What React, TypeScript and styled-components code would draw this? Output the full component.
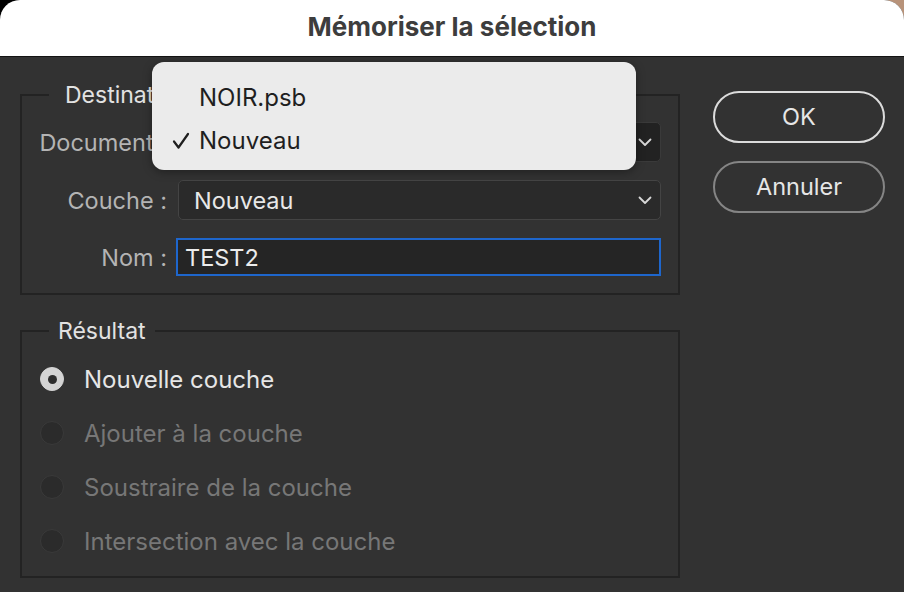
import React from "react";
import styled, { createGlobalStyle } from "styled-components";

const GlobalStyle = createGlobalStyle`
  html, body {
    margin: 0;
    width: 904px;
    height: 592px;
    overflow: hidden;
    background: linear-gradient(90deg, #000 50%, #b8937a 50%);
    font-family: Inter, "Noto Sans", "Liberation Sans", sans-serif;
  }
  * { box-sizing: border-box; }
`;

const Window = styled.div`
  position: relative;
  width: 904px;
  height: 592px;
  border-radius: 20px 20px 0 0;
  overflow: hidden;
  background: #323232;
  display: flex;
  flex-direction: column;
`;

const TitleBar = styled.div`
  height: 57px;
  flex: none;
  background: #fff;
  border-bottom: 1px solid #141414;
  display: flex;
  align-items: center;
  justify-content: center;
`;

const Title = styled.h1`
  margin: 0 0 4px 0;
  font-size: 26px;
  font-weight: 700;
  color: #3d3d3d;
`;

const Body = styled.div`
  flex: 1;
  display: flex;
  gap: 33px;
  padding: 24px 0 0 20px;
`;

const Main = styled.div`
  width: 660px;
  display: flex;
  flex-direction: column;
  gap: 22px;
`;

const Group = styled.fieldset`
  margin: 0;
  padding: 0;
  border: 2px solid #232323;
  min-width: 0;
`;

const Legend = styled.legend<{ $pad: number }>`
  margin-left: 27px;
  padding: 0 ${(p) => p.$pad}px;
  font-size: 23px;
  line-height: 28px;
  color: #e2e2e2;
`;

const FormGrid = styled.div`
  display: grid;
  grid-template-columns: 145px 483px;
  column-gap: 11px;
  row-gap: 18px;
  align-items: center;
  padding: 13px 0 17px 0;
`;

const Label = styled.label`
  text-align: right;
  font-size: 23.5px;
  color: #b4b4b4;
  white-space: nowrap;
`;

const Select = styled.div<{ $tone: "dark" | "mid" }>`
  height: 40px;
  display: flex;
  align-items: center;
  justify-content: space-between;
  padding: 0 8px 0 15px;
  border-radius: 5px;
  border: 1px solid ${(p) => (p.$tone === "dark" ? "#3a3a3a" : "#444")};
  background: ${(p) => (p.$tone === "dark" ? "#222" : "#2a2a2a")};
  font-size: 23.5px;
  color: #e8e8e8;
`;

const TextInput = styled.div`
  height: 38px;
  margin-left: -2px;
  display: flex;
  align-items: center;
  padding-left: 7px;
  border: 2px solid #1e66cc;
  background: #252525;
  font-size: 23.5px;
  color: #ececec;
`;

const RadioList = styled.div`
  display: flex;
  flex-direction: column;
  padding: 7px 0 8px 18px;
`;

const RadioRow = styled.div<{ $disabled?: boolean }>`
  height: 54px;
  display: flex;
  align-items: center;
  gap: 20px;
  font-size: 24px;
  color: ${(p) => (p.$disabled ? "#777" : "#e6e6e6")};
`;

const RadioDot = styled.span<{ $checked?: boolean }>`
  width: 24px;
  height: 24px;
  flex: none;
  border-radius: 50%;
  display: flex;
  align-items: center;
  justify-content: center;
  background: ${(p) => (p.$checked ? "#d4d4d4" : "#2b2b2b")};
  border: 1px solid ${(p) => (p.$checked ? "#d4d4d4" : "#3a3a3a")};
  &::after {
    content: "";
    display: ${(p) => (p.$checked ? "block" : "none")};
    width: 9px;
    height: 9px;
    border-radius: 50%;
    background: #2e2e2e;
  }
`;

const Buttons = styled.div`
  width: 172px;
  padding-top: 10px;
  display: flex;
  flex-direction: column;
  gap: 18px;
`;

const Button = styled.button<{ $primary?: boolean }>`
  height: 52px;
  border-radius: 26px;
  background: transparent;
  border: 2px solid ${(p) => (p.$primary ? "#dcdcdc" : "#858585")};
  color: #e6e6e6;
  font-family: inherit;
  font-size: 23.5px;
  padding: 0 0 2px 0;
`;

const Menu = styled.div`
  position: absolute;
  left: 152px;
  top: 62px;
  width: 484px;
  height: 108px;
  padding: 14px 0 8px 0;
  border-radius: 12px;
  background: #ebebeb;
  box-shadow: 0 2px 10px rgba(0, 0, 0, 0.35);
`;

const MenuItem = styled.div`
  height: 43px;
  display: flex;
  align-items: center;
  font-size: 24px;
  color: #1f1f1f;
`;

const CheckSlot = styled.span`
  width: 47px;
  display: flex;
  justify-content: flex-end;
  padding-right: 9px;
`;

const Chevron = () => (
  <svg width="14" height="9" viewBox="0 0 14 9">
    <polyline points="1.5,1.5 7,7 12.5,1.5" fill="none" stroke="#d8d8d8" strokeWidth="1.8" strokeLinecap="round" strokeLinejoin="round" />
  </svg>
);

const Check = () => (
  <svg width="18" height="18" viewBox="0 0 18 18">
    <polyline points="2,9.5 6.5,15.5 16,2" fill="none" stroke="#1f1f1f" strokeWidth="2.2" strokeLinecap="round" strokeLinejoin="round" />
  </svg>
);

const options = [
  { label: "Nouvelle couche", checked: true },
  { label: "Ajouter à la couche", disabled: true },
  { label: "Soustraire de la couche", disabled: true },
  { label: "Intersection avec la couche", disabled: true },
];

export default function App() {
  return (
    <>
      <GlobalStyle />
      <Window>
        <TitleBar>
          <Title>Mémoriser la sélection</Title>
        </TitleBar>
        <Body>
          <Main>
            <Group>
              <Legend $pad={16}>Destination</Legend>
              <FormGrid>
                <Label>Document :</Label>
                <Select $tone="dark">
                  <span />
                  <Chevron />
                </Select>
                <Label>Couche :</Label>
                <Select $tone="mid">
                  <span>Nouveau</span>
                  <Chevron />
                </Select>
                <Label>Nom :</Label>
                <TextInput>TEST2</TextInput>
              </FormGrid>
            </Group>
            <Group>
              <Legend $pad={9}>Résultat</Legend>
              <RadioList>
                {options.map((o) => (
                  <RadioRow key={o.label} $disabled={o.disabled}>
                    <RadioDot $checked={o.checked} />
                    {o.label}
                  </RadioRow>
                ))}
              </RadioList>
            </Group>
          </Main>
          <Buttons>
            <Button $primary>OK</Button>
            <Button>Annuler</Button>
          </Buttons>
        </Body>
        <Menu>
          <MenuItem>
            <CheckSlot />
            NOIR.psb
          </MenuItem>
          <MenuItem>
            <CheckSlot>
              <Check />
            </CheckSlot>
            Nouveau
          </MenuItem>
        </Menu>
      </Window>
    </>
  );
}
